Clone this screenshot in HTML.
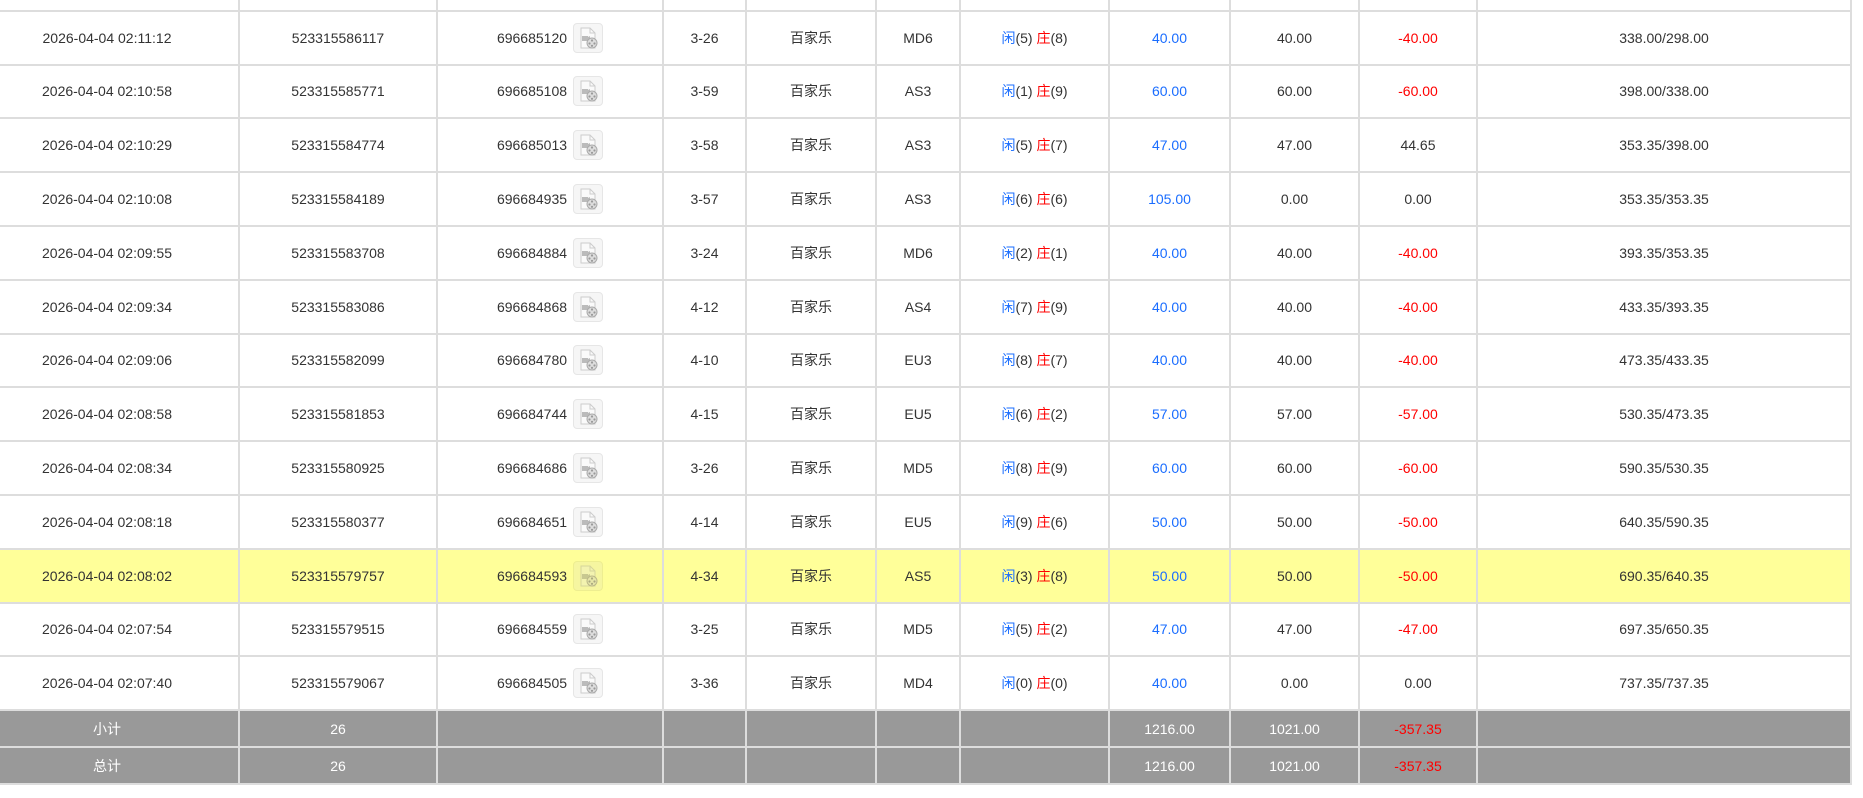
<!DOCTYPE html>
<html><head><meta charset="utf-8">
<style>
html,body{margin:0;padding:0;background:#fff;width:1863px;height:798px;overflow:hidden}
table{position:absolute;left:-26px;top:-44px;width:1876px;border-collapse:collapse;table-layout:fixed;font-family:"Liberation Sans","Noto Sans CJK SC",sans-serif;font-size:14px;color:#333}
td{border:2px solid #ddd;text-align:center;height:51.8px;padding:0;white-space:nowrap}
tr.g td{background:#999;color:#fff;height:35px}
tr.g td.r{color:#f00}
tr.h td{background:#ffff99}
.b{color:#1a6dff}.r{color:#f00}
.n{vertical-align:middle}
.ic{display:inline-block;vertical-align:middle;width:30px;height:30px;border:1px solid #e6e6e6;border-radius:4px;background:#f6f6f6;margin-left:6px;box-sizing:border-box}
tr.h .ic{background:#f6f6a0;border-color:#eeee90}
.ic svg{display:block;margin:3px auto 0}
</style></head><body>
<table>
<colgroup><col style="width:264px"><col style="width:198px"><col style="width:226px"><col style="width:83px"><col style="width:130px"><col style="width:84px"><col style="width:149px"><col style="width:121px"><col style="width:129px"><col style="width:118px"><col style="width:374px"></colgroup>
<tr><td></td><td></td><td></td><td></td><td></td><td></td><td></td><td></td><td></td><td></td><td></td></tr>
<tr><td>2026-04-04 02:11:12</td><td>523315586117</td><td><span class="n">696685120</span><span class="ic"><svg width="22" height="22" viewBox="0 0 22 22"><path d="M4 1h9l5 5v15H4z" fill="#fafafa" stroke="#ccc"/><path d="M13 1v5h5" fill="none" stroke="#ccc"/><rect x="5" y="9" width="6" height="5" fill="#bbb"/><path d="M11 10l2-1v5l-2-1z" fill="#bbb"/><circle cx="15" cy="16" r="5" fill="#ddd" stroke="#aaa"/><circle cx="15" cy="13.5" r="1.1" fill="#999"/><circle cx="12.5" cy="16.5" r="1.1" fill="#999"/><circle cx="17.5" cy="16.5" r="1.1" fill="#999"/><circle cx="15" cy="18.8" r="1.1" fill="#999"/></svg></span></td><td>3-26</td><td>百家乐</td><td>MD6</td><td><span class="b">闲</span>(5) <span class="r">庄</span>(8)</td><td class="b">40.00</td><td>40.00</td><td class="r">-40.00</td><td>338.00/298.00</td></tr>
<tr><td>2026-04-04 02:10:58</td><td>523315585771</td><td><span class="n">696685108</span><span class="ic"><svg width="22" height="22" viewBox="0 0 22 22"><path d="M4 1h9l5 5v15H4z" fill="#fafafa" stroke="#ccc"/><path d="M13 1v5h5" fill="none" stroke="#ccc"/><rect x="5" y="9" width="6" height="5" fill="#bbb"/><path d="M11 10l2-1v5l-2-1z" fill="#bbb"/><circle cx="15" cy="16" r="5" fill="#ddd" stroke="#aaa"/><circle cx="15" cy="13.5" r="1.1" fill="#999"/><circle cx="12.5" cy="16.5" r="1.1" fill="#999"/><circle cx="17.5" cy="16.5" r="1.1" fill="#999"/><circle cx="15" cy="18.8" r="1.1" fill="#999"/></svg></span></td><td>3-59</td><td>百家乐</td><td>AS3</td><td><span class="b">闲</span>(1) <span class="r">庄</span>(9)</td><td class="b">60.00</td><td>60.00</td><td class="r">-60.00</td><td>398.00/338.00</td></tr>
<tr><td>2026-04-04 02:10:29</td><td>523315584774</td><td><span class="n">696685013</span><span class="ic"><svg width="22" height="22" viewBox="0 0 22 22"><path d="M4 1h9l5 5v15H4z" fill="#fafafa" stroke="#ccc"/><path d="M13 1v5h5" fill="none" stroke="#ccc"/><rect x="5" y="9" width="6" height="5" fill="#bbb"/><path d="M11 10l2-1v5l-2-1z" fill="#bbb"/><circle cx="15" cy="16" r="5" fill="#ddd" stroke="#aaa"/><circle cx="15" cy="13.5" r="1.1" fill="#999"/><circle cx="12.5" cy="16.5" r="1.1" fill="#999"/><circle cx="17.5" cy="16.5" r="1.1" fill="#999"/><circle cx="15" cy="18.8" r="1.1" fill="#999"/></svg></span></td><td>3-58</td><td>百家乐</td><td>AS3</td><td><span class="b">闲</span>(5) <span class="r">庄</span>(7)</td><td class="b">47.00</td><td>47.00</td><td>44.65</td><td>353.35/398.00</td></tr>
<tr><td>2026-04-04 02:10:08</td><td>523315584189</td><td><span class="n">696684935</span><span class="ic"><svg width="22" height="22" viewBox="0 0 22 22"><path d="M4 1h9l5 5v15H4z" fill="#fafafa" stroke="#ccc"/><path d="M13 1v5h5" fill="none" stroke="#ccc"/><rect x="5" y="9" width="6" height="5" fill="#bbb"/><path d="M11 10l2-1v5l-2-1z" fill="#bbb"/><circle cx="15" cy="16" r="5" fill="#ddd" stroke="#aaa"/><circle cx="15" cy="13.5" r="1.1" fill="#999"/><circle cx="12.5" cy="16.5" r="1.1" fill="#999"/><circle cx="17.5" cy="16.5" r="1.1" fill="#999"/><circle cx="15" cy="18.8" r="1.1" fill="#999"/></svg></span></td><td>3-57</td><td>百家乐</td><td>AS3</td><td><span class="b">闲</span>(6) <span class="r">庄</span>(6)</td><td class="b">105.00</td><td>0.00</td><td>0.00</td><td>353.35/353.35</td></tr>
<tr><td>2026-04-04 02:09:55</td><td>523315583708</td><td><span class="n">696684884</span><span class="ic"><svg width="22" height="22" viewBox="0 0 22 22"><path d="M4 1h9l5 5v15H4z" fill="#fafafa" stroke="#ccc"/><path d="M13 1v5h5" fill="none" stroke="#ccc"/><rect x="5" y="9" width="6" height="5" fill="#bbb"/><path d="M11 10l2-1v5l-2-1z" fill="#bbb"/><circle cx="15" cy="16" r="5" fill="#ddd" stroke="#aaa"/><circle cx="15" cy="13.5" r="1.1" fill="#999"/><circle cx="12.5" cy="16.5" r="1.1" fill="#999"/><circle cx="17.5" cy="16.5" r="1.1" fill="#999"/><circle cx="15" cy="18.8" r="1.1" fill="#999"/></svg></span></td><td>3-24</td><td>百家乐</td><td>MD6</td><td><span class="b">闲</span>(2) <span class="r">庄</span>(1)</td><td class="b">40.00</td><td>40.00</td><td class="r">-40.00</td><td>393.35/353.35</td></tr>
<tr><td>2026-04-04 02:09:34</td><td>523315583086</td><td><span class="n">696684868</span><span class="ic"><svg width="22" height="22" viewBox="0 0 22 22"><path d="M4 1h9l5 5v15H4z" fill="#fafafa" stroke="#ccc"/><path d="M13 1v5h5" fill="none" stroke="#ccc"/><rect x="5" y="9" width="6" height="5" fill="#bbb"/><path d="M11 10l2-1v5l-2-1z" fill="#bbb"/><circle cx="15" cy="16" r="5" fill="#ddd" stroke="#aaa"/><circle cx="15" cy="13.5" r="1.1" fill="#999"/><circle cx="12.5" cy="16.5" r="1.1" fill="#999"/><circle cx="17.5" cy="16.5" r="1.1" fill="#999"/><circle cx="15" cy="18.8" r="1.1" fill="#999"/></svg></span></td><td>4-12</td><td>百家乐</td><td>AS4</td><td><span class="b">闲</span>(7) <span class="r">庄</span>(9)</td><td class="b">40.00</td><td>40.00</td><td class="r">-40.00</td><td>433.35/393.35</td></tr>
<tr><td>2026-04-04 02:09:06</td><td>523315582099</td><td><span class="n">696684780</span><span class="ic"><svg width="22" height="22" viewBox="0 0 22 22"><path d="M4 1h9l5 5v15H4z" fill="#fafafa" stroke="#ccc"/><path d="M13 1v5h5" fill="none" stroke="#ccc"/><rect x="5" y="9" width="6" height="5" fill="#bbb"/><path d="M11 10l2-1v5l-2-1z" fill="#bbb"/><circle cx="15" cy="16" r="5" fill="#ddd" stroke="#aaa"/><circle cx="15" cy="13.5" r="1.1" fill="#999"/><circle cx="12.5" cy="16.5" r="1.1" fill="#999"/><circle cx="17.5" cy="16.5" r="1.1" fill="#999"/><circle cx="15" cy="18.8" r="1.1" fill="#999"/></svg></span></td><td>4-10</td><td>百家乐</td><td>EU3</td><td><span class="b">闲</span>(8) <span class="r">庄</span>(7)</td><td class="b">40.00</td><td>40.00</td><td class="r">-40.00</td><td>473.35/433.35</td></tr>
<tr><td>2026-04-04 02:08:58</td><td>523315581853</td><td><span class="n">696684744</span><span class="ic"><svg width="22" height="22" viewBox="0 0 22 22"><path d="M4 1h9l5 5v15H4z" fill="#fafafa" stroke="#ccc"/><path d="M13 1v5h5" fill="none" stroke="#ccc"/><rect x="5" y="9" width="6" height="5" fill="#bbb"/><path d="M11 10l2-1v5l-2-1z" fill="#bbb"/><circle cx="15" cy="16" r="5" fill="#ddd" stroke="#aaa"/><circle cx="15" cy="13.5" r="1.1" fill="#999"/><circle cx="12.5" cy="16.5" r="1.1" fill="#999"/><circle cx="17.5" cy="16.5" r="1.1" fill="#999"/><circle cx="15" cy="18.8" r="1.1" fill="#999"/></svg></span></td><td>4-15</td><td>百家乐</td><td>EU5</td><td><span class="b">闲</span>(6) <span class="r">庄</span>(2)</td><td class="b">57.00</td><td>57.00</td><td class="r">-57.00</td><td>530.35/473.35</td></tr>
<tr><td>2026-04-04 02:08:34</td><td>523315580925</td><td><span class="n">696684686</span><span class="ic"><svg width="22" height="22" viewBox="0 0 22 22"><path d="M4 1h9l5 5v15H4z" fill="#fafafa" stroke="#ccc"/><path d="M13 1v5h5" fill="none" stroke="#ccc"/><rect x="5" y="9" width="6" height="5" fill="#bbb"/><path d="M11 10l2-1v5l-2-1z" fill="#bbb"/><circle cx="15" cy="16" r="5" fill="#ddd" stroke="#aaa"/><circle cx="15" cy="13.5" r="1.1" fill="#999"/><circle cx="12.5" cy="16.5" r="1.1" fill="#999"/><circle cx="17.5" cy="16.5" r="1.1" fill="#999"/><circle cx="15" cy="18.8" r="1.1" fill="#999"/></svg></span></td><td>3-26</td><td>百家乐</td><td>MD5</td><td><span class="b">闲</span>(8) <span class="r">庄</span>(9)</td><td class="b">60.00</td><td>60.00</td><td class="r">-60.00</td><td>590.35/530.35</td></tr>
<tr><td>2026-04-04 02:08:18</td><td>523315580377</td><td><span class="n">696684651</span><span class="ic"><svg width="22" height="22" viewBox="0 0 22 22"><path d="M4 1h9l5 5v15H4z" fill="#fafafa" stroke="#ccc"/><path d="M13 1v5h5" fill="none" stroke="#ccc"/><rect x="5" y="9" width="6" height="5" fill="#bbb"/><path d="M11 10l2-1v5l-2-1z" fill="#bbb"/><circle cx="15" cy="16" r="5" fill="#ddd" stroke="#aaa"/><circle cx="15" cy="13.5" r="1.1" fill="#999"/><circle cx="12.5" cy="16.5" r="1.1" fill="#999"/><circle cx="17.5" cy="16.5" r="1.1" fill="#999"/><circle cx="15" cy="18.8" r="1.1" fill="#999"/></svg></span></td><td>4-14</td><td>百家乐</td><td>EU5</td><td><span class="b">闲</span>(9) <span class="r">庄</span>(6)</td><td class="b">50.00</td><td>50.00</td><td class="r">-50.00</td><td>640.35/590.35</td></tr>
<tr class="h"><td>2026-04-04 02:08:02</td><td>523315579757</td><td><span class="n">696684593</span><span class="ic"><svg width="22" height="22" viewBox="0 0 22 22"><path d="M4 1h9l5 5v15H4z" fill="#f3f3b0" stroke="#d6d69a"/><path d="M13 1v5h5" fill="none" stroke="#d6d69a"/><rect x="5" y="9" width="6" height="5" fill="#c8c890"/><path d="M11 10l2-1v5l-2-1z" fill="#c8c890"/><circle cx="15" cy="16" r="5" fill="#e6e6a8" stroke="#bbb888"/><circle cx="15" cy="13.5" r="1.1" fill="#aaa880"/><circle cx="12.5" cy="16.5" r="1.1" fill="#aaa880"/><circle cx="17.5" cy="16.5" r="1.1" fill="#aaa880"/><circle cx="15" cy="18.8" r="1.1" fill="#aaa880"/></svg></span></td><td>4-34</td><td>百家乐</td><td>AS5</td><td><span class="b">闲</span>(3) <span class="r">庄</span>(8)</td><td class="b">50.00</td><td>50.00</td><td class="r">-50.00</td><td>690.35/640.35</td></tr>
<tr><td>2026-04-04 02:07:54</td><td>523315579515</td><td><span class="n">696684559</span><span class="ic"><svg width="22" height="22" viewBox="0 0 22 22"><path d="M4 1h9l5 5v15H4z" fill="#fafafa" stroke="#ccc"/><path d="M13 1v5h5" fill="none" stroke="#ccc"/><rect x="5" y="9" width="6" height="5" fill="#bbb"/><path d="M11 10l2-1v5l-2-1z" fill="#bbb"/><circle cx="15" cy="16" r="5" fill="#ddd" stroke="#aaa"/><circle cx="15" cy="13.5" r="1.1" fill="#999"/><circle cx="12.5" cy="16.5" r="1.1" fill="#999"/><circle cx="17.5" cy="16.5" r="1.1" fill="#999"/><circle cx="15" cy="18.8" r="1.1" fill="#999"/></svg></span></td><td>3-25</td><td>百家乐</td><td>MD5</td><td><span class="b">闲</span>(5) <span class="r">庄</span>(2)</td><td class="b">47.00</td><td>47.00</td><td class="r">-47.00</td><td>697.35/650.35</td></tr>
<tr><td>2026-04-04 02:07:40</td><td>523315579067</td><td><span class="n">696684505</span><span class="ic"><svg width="22" height="22" viewBox="0 0 22 22"><path d="M4 1h9l5 5v15H4z" fill="#fafafa" stroke="#ccc"/><path d="M13 1v5h5" fill="none" stroke="#ccc"/><rect x="5" y="9" width="6" height="5" fill="#bbb"/><path d="M11 10l2-1v5l-2-1z" fill="#bbb"/><circle cx="15" cy="16" r="5" fill="#ddd" stroke="#aaa"/><circle cx="15" cy="13.5" r="1.1" fill="#999"/><circle cx="12.5" cy="16.5" r="1.1" fill="#999"/><circle cx="17.5" cy="16.5" r="1.1" fill="#999"/><circle cx="15" cy="18.8" r="1.1" fill="#999"/></svg></span></td><td>3-36</td><td>百家乐</td><td>MD4</td><td><span class="b">闲</span>(0) <span class="r">庄</span>(0)</td><td class="b">40.00</td><td>0.00</td><td>0.00</td><td>737.35/737.35</td></tr>
<tr class="g"><td>小计</td><td>26</td><td></td><td></td><td></td><td></td><td></td><td>1216.00</td><td>1021.00</td><td class="r">-357.35</td><td></td></tr>
<tr class="g"><td>总计</td><td>26</td><td></td><td></td><td></td><td></td><td></td><td>1216.00</td><td>1021.00</td><td class="r">-357.35</td><td></td></tr>
</table>
</body></html>
